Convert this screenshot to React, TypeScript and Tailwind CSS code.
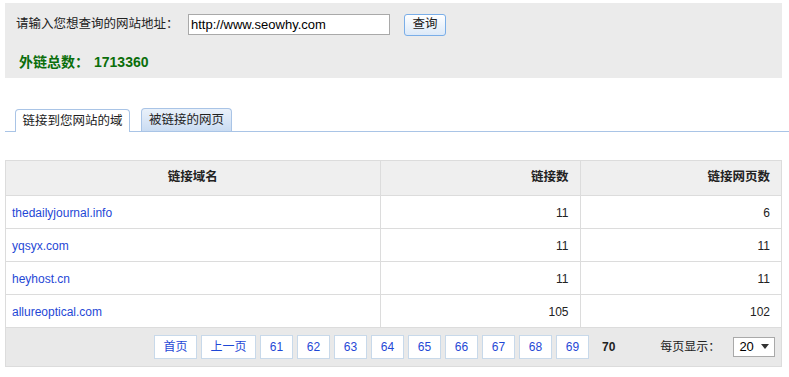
import React from "react";

const rows = [
  { domain: "thedailyjournal.info", links: 11, pages: 6 },
  { domain: "yqsyx.com", links: 11, pages: 11 },
  { domain: "heyhost.cn", links: 11, pages: 11 },
  { domain: "allureoptical.com", links: 105, pages: 102 },
];

const pages = ["61", "62", "63", "64", "65", "66", "67", "68", "69"];

const font = "font-['Liberation_Sans','Noto_Sans_CJK_SC',sans-serif]";

export default function App() {
  return (
    <div className={`${font} w-[789px] h-[377px] bg-white pt-[3px] pl-[5px] pr-[7px] text-[12px] text-[#333]`}>
      {/* search panel */}
      <div className="h-[75px] bg-[#ebebeb] pl-[11px] pt-[11px]">
        <div className="flex items-center h-[21px]">
          <span className="text-[12.5px] text-[#222] w-[172px]">请输入您想查询的网站地址：</span>
          <input
            className="h-[21px] w-[202px] border border-[#a9a9a9] bg-white px-[2px] text-[13px] text-black outline-none"
            defaultValue="http://www.seowhy.com"
          />
          <button className="ml-[14px] h-[22px] w-[42px] rounded-[3px] border border-[#7aaee8] bg-gradient-to-b from-white to-[#dce9f8] text-[12.5px] text-[#222]">
            查询
          </button>
        </div>
        <div className="mt-[17px] ml-[3px] flex items-baseline font-bold text-[14px] text-[#0a6e0a]">
          外链总数：<span className="ml-[5px] text-[14px]">1713360</span>
        </div>
      </div>

      {/* tabs */}
      <div className="mt-[31px] flex items-end h-[23px] border-b border-[#a9c4e6] pl-[10px] gap-[11px] w-[784px]">
        <div className="h-[23px] w-[115px] flex items-center justify-center rounded-t-[4px] border border-b-0 border-[#a9c4e6] bg-white text-[12.5px] text-[#222] relative top-[1px]">
          链接到您网站的域
        </div>
        <div className="h-[23px] w-[91px] flex items-center justify-center rounded-t-[4px] border border-b-0 border-[#a9c4e6] bg-gradient-to-b from-[#eaf1fa] to-[#cadcf2] text-[12.5px] text-[#222]">
          被链接的网页
        </div>
      </div>

      {/* table */}
      <div className="mt-[28px] w-[777px] border border-[#dcdcdc]">
        <table className="w-full border-collapse table-fixed">
          <colgroup>
            <col className="w-[374px]" />
            <col className="w-[200px]" />
            <col />
          </colgroup>
          <thead>
            <tr className="h-[34px] bg-[#efefef]">
              <th className="border-b border-[#dcdcdc] text-center font-bold text-[12.5px] text-[#222]">链接域名</th>
              <th className="border-b border-l border-[#dcdcdc] text-right pr-[11px] font-bold text-[12.5px] text-[#222]">链接数</th>
              <th className="border-b border-l border-[#dcdcdc] text-right pr-[11px] font-bold text-[12.5px] text-[#222]">链接网页数</th>
            </tr>
          </thead>
          <tbody>
            {rows.map((r) => (
              <tr key={r.domain} className="h-[33px]">
                <td className="border-b border-[#dcdcdc] pl-[6px] pt-[2px] text-[12px] text-[#1f48d6]">{r.domain}</td>
                <td className="border-b border-l border-[#dcdcdc] pr-[11px] pt-[2px] text-right text-[12px] text-[#222]">{r.links}</td>
                <td className="border-b border-l border-[#dcdcdc] pr-[11px] pt-[2px] text-right text-[12px] text-[#222]">{r.pages}</td>
              </tr>
            ))}
          </tbody>
        </table>
        <div className="h-[38px] bg-[#e9e9e9] flex items-center pl-[148px]">
          <div className="flex items-center gap-[4px]">
            <a className="h-[24px] w-[43px] flex items-center justify-center border border-[#c8d9ea] bg-white text-[#1f48d6]">首页</a>
            <a className="h-[24px] w-[55px] flex items-center justify-center border border-[#c8d9ea] bg-white text-[#1f48d6]">上一页</a>
            {pages.map((p) => (
              <a key={p} className="h-[24px] w-[33px] flex items-center justify-center border border-[#c8d9ea] bg-white text-[#1f48d6]">
                {p}
              </a>
            ))}
          </div>
          <span className="ml-[13px] font-bold text-[#222]">70</span>
          <span className="ml-[45px] text-[#222]">每页显示：</span>
          <div className="ml-[13px] h-[20px] w-[42px] flex items-center justify-between border border-[#a9a9a9] bg-white pl-[5px] pr-[5px] text-[13px] text-black">
            20
            <svg width="8" height="5" viewBox="0 0 8 5">
              <path d="M0 0h8L4 5z" fill="#333" />
            </svg>
          </div>
        </div>
      </div>
    </div>
  );
}
